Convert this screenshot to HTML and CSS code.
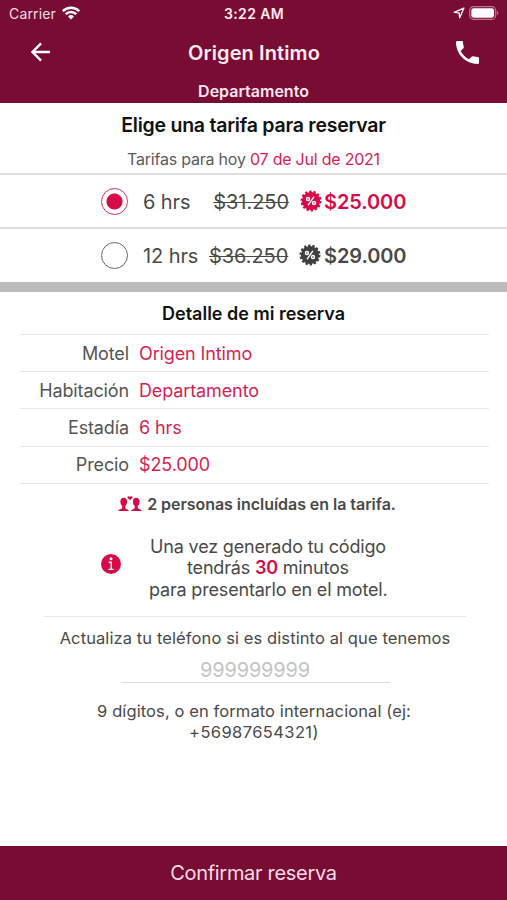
FILE: index.html
```html
<!DOCTYPE html>
<html lang="es">
<head>
<meta charset="utf-8">
<meta name="viewport" content="width=device-width, initial-scale=1">
<title>Origen Intimo</title>
<link rel="stylesheet" href="styles.css">
</head>
<body>
<svg width="0" height="0" class="defs" aria-hidden="true">
  <symbol id="badge" viewBox="0 0 22 22">
    <circle cx="11" cy="11" r="9.1" fill="currentColor"/>
    <circle cx="11" cy="11" r="9.2" fill="none" stroke="currentColor" stroke-width="2.6" stroke-dasharray="2.3 1.829"/>
    <g fill="none" stroke="#fff" stroke-width="1.4" stroke-linecap="round">
      <path d="M13.700 7.200 8.300 14.800"/><circle cx="8" cy="9" r="1.500"/><circle cx="14" cy="13" r="1.500"/>
    </g>
  </symbol>
</svg>
<div class="app">
  <header class="header">
    <div class="status">
      <div class="status-left"><span class="carrier">Carrier</span>
        <svg class="wifi" viewBox="0 0 18 14" fill="none" stroke="#fff" stroke-width="2.4"><path d="M.8 5.2a11.6 11.6 0 0 1 16.4 0M3.7 8.2a7.5 7.5 0 0 1 10.6 0"/><path d="M9 13.6 6 10.5a4.3 4.3 0 0 1 6 0Z" fill="#fff" stroke="none"/></svg>
      </div>
      <span class="time">3:22 AM</span>
      <div class="status-right">
        <svg class="locate" viewBox="0 0 12 12" fill="none" stroke="#fff" stroke-width="1.3" stroke-linejoin="round"><path d="M10.9 1.1 1.2 5.4l4.9.5.6 4.9Z"/></svg>
        <svg class="battery" viewBox="0 0 30 14"><rect x=".7" y=".7" width="26" height="12.6" rx="3.8" fill="none" stroke="#b9798e" stroke-width="1.2"/><rect x="2.3" y="2.3" width="22.8" height="9.4" rx="2.4" fill="#fff"/><path d="M28 4.8c1.8.7 1.8 3.7 0 4.4Z" fill="#b9798e"/></svg>
      </div>
    </div>
    <div class="nav">
      <svg class="back" viewBox="0 0 24 24" fill="none" stroke="#fff" stroke-width="2.9"><path d="M24 12H3.500M13.300 1.700 3 12l10.300 10.300"/></svg>
      <h1 class="title">Origen Intimo</h1>
      <svg class="phone" viewBox="3 3 18 18" fill="#fff"><path d="M6.62 10.79c1.44 2.83 3.76 5.14 6.59 6.59l2.2-2.2c.27-.27.67-.36 1.02-.24 1.12.37 2.33.57 3.57.57.55 0 1 .45 1 1V20c0 .55-.45 1-1 1-9.39 0-17-7.61-17-17 0-.55.45-1 1-1h3.5c.55 0 1 .45 1 1 0 1.25.2 2.45.57 3.57.11.35.03.74-.25 1.02z"/></svg>
    </div>
    <div class="room"><span>Departamento</span></div>
  </header>

  <section class="rates">
    <h2 class="rates-title"><span>Elige una tarifa para reservar</span></h2>
    <p class="rates-date"><span>Tarifas para hoy <b>07 de Jul de 2021</b></span></p>
    <div class="rate selected">
      <span class="radio"></span><span class="hours"><span>6 hrs</span></span><s class="old"><span>$31.250</span></s>
      <svg class="badge"><use href="#badge"/></svg><span class="price">$25.000</span>
    </div>
    <div class="rate">
      <span class="radio"></span><span class="hours"><span>12 hrs</span></span><s class="old"><span>$36.250</span></s>
      <svg class="badge"><use href="#badge"/></svg><span class="price">$29.000</span>
    </div>
  </section>

  <section class="detail">
    <h2 class="detail-title"><span>Detalle de mi reserva</span></h2>
    <dl class="facts">
      <div class="fact"><dt>Motel</dt><dd>Origen Intimo</dd></div>
      <div class="fact"><dt>Habitación</dt><dd>Departamento</dd></div>
      <div class="fact"><dt>Estadía</dt><dd>6 hrs</dd></div>
      <div class="fact"><dt>Precio</dt><dd>$25.000</dd></div>
    </dl>
    <p class="people">
      <svg class="couple" viewBox="0 0 24 16" fill="#d60b47"><path id="person" d="M5.800 1.800C3.500 1.800 2.200 3.400 2.400 6c.1 1.900.9 3.200 1.800 4v1.600c0 1-.7 1.300-1.900 1.600C.9 13.600.4 14 .3 15h10.400c0-1-.4-1.400-1.800-1.800-1.100-.3-1.600-.6-1.600-1.600V10c.9-.8 1.700-2.100 1.800-4 .1-2.600-1.200-4.200-3.300-4.200Z"/><use href="#person" transform="matrix(-1 0 0 1 24 0)"/><path d="M12 4.200 9.700 2C8.500.6 10.900-.6 12 .8c1.100-1.400 3.500-.2 2.300 1.200Z"/></svg>
      <span>2 personas incluídas en la tarifa.</span>
    </p>
    <div class="notice">
      <svg class="info" viewBox="0 0 20 20"><circle cx="10" cy="10" r="10" fill="#d60b47"/><circle cx="10" cy="4.800" r="1.500" fill="#fff"/><path d="M7.700 8.200h2.500v7M7.400 15.400h5.200" fill="none" stroke="#fff" stroke-width="1.400"/></svg>
      <p>Una vez generado tu código<br>tendrás <b>30</b> minutos<br>para presentarlo en el motel.</p>
    </div>
  </section>

  <section class="contact">
    <label class="contact-label" for="tel">Actualiza tu teléfono si es distinto al que tenemos</label>
    <input class="contact-input" id="tel" type="tel" placeholder="999999999">
    <p class="hint">9 dígitos, o en formato internacional (ej:<br><span class="example">+56987654321)</span></p>
  </section>

  <button class="confirm"><span>Confirmar reserva</span></button>
</div>
</body>
</html>
```
FILE: styles.css
```css
* { box-sizing: border-box; }
body { margin: 0; background: #fff; color: #4a4a4a; font-family: Inter, "Liberation Sans", sans-serif; }
h1, h2, p, dl, dd { margin: 0; }
.defs { position: absolute; }
.app { display: flex; flex-direction: column; height: 900px; overflow: hidden; }

.header { height: 103px; background: #790c33; color: #fff; flex: none; }
.status { display: grid; grid-template-columns: 1fr auto 1fr; align-items: center; height: 27px; padding: 0 8px 0 9px; }
.status-left, .status-right { display: flex; align-items: center; }
.status-left { gap: 6px; }
.carrier { font-size: 14px; color: #f3dce4; letter-spacing: .15px; }
.wifi { width: 18px; height: 14px; margin-top: -2px; }
.time { font-size: 14px; font-weight: 600; letter-spacing: .4px; color: #fbeaf0; }
.status-right { justify-content: flex-end; gap: 4px; margin-top: -1px; }
.locate { width: 12px; height: 12px; }
.battery { width: 30px; height: 14px; }
.nav { display: flex; align-items: center; justify-content: space-between; height: 49px; padding: 0 28px 0 28px; }
.back { width: 24px; height: 20px; }
.title { font-size: 20px; font-weight: 600; letter-spacing: .1px; color: #fdeaf1; margin-top: 2px; }
.phone { width: 23px; height: 23px; margin-top: 1px; }
.room { display: flex; justify-content: center; align-items: center; height: 29px; padding-top: 1px; font-size: 16px; font-weight: 600; color: #fbe6ee; }

.rates { flex: none; padding-bottom: 1px; border-bottom: 10px solid #bcbcbc; }
.rates-title { height: 44px; line-height: 45px; text-align: center; font-size: 19.500px; font-weight: 600; letter-spacing: -.24px; color: #111; }
.rates-date { height: 26px; line-height: 24px; text-align: center; font-size: 16px; letter-spacing: -.22px; color: #5c5c5c; }
.rates-date b { font-weight: 400; color: #d61f54; }
.rate { display: flex; align-items: center; height: 54px; border-top: 2px solid #dedede; padding-left: 101px; font-size: 20px; }
.radio { width: 27px; height: 27px; border: 1.500px solid #666; border-radius: 50%; flex: none; }
.hours { width: 66px; margin-left: 15px; white-space: nowrap; letter-spacing: -.1px; }
.old { width: 79px; text-align: right; flex: none; letter-spacing: -.05px; text-decoration-thickness: 1px; }
.selected .old { width: 80px; }
.hours, .old, .price { padding-top: 1px; }
.badge { width: 22px; height: 22px; margin-left: 11px; color: #404040; flex: none; }
.selected .badge { margin-left: 11px; }
.price { font-weight: 600; margin-left: 3px; letter-spacing: -.1px; }
.selected .price { margin-left: 2px; }
.selected .radio { border-color: #dc2c60; background: radial-gradient(circle, #d60b47 7.500px, #fff 8.500px); }
.selected .badge, .selected .price { color: #d60b47; }

.detail { flex: none; }
.detail-title { height: 42px; line-height: 43px; text-align: center; font-size: 18px; font-weight: 600; color: #111; }
.facts { margin: 0 18px 0 20px; border-bottom: 1px solid #e6e6e6; }
.fact { display: flex; gap: 10px; align-items: center; height: 37.200px; border-top: 1px solid #e6e6e6; font-size: 18px; letter-spacing: -.12px; }
.fact dt { width: 109px; text-align: right; color: #555; }
.fact dd { color: #d61f54; }
.people { display: flex; justify-content: center; align-items: center; gap: 5px; height: 41px; padding-left: 7px; font-size: 16px; font-weight: 600; letter-spacing: -.04px; }
.couple { width: 24px; height: 16px; }
.notice { display: flex; align-items: center; height: 91px; padding: 0 119px 4px 101px; }
.info { width: 20px; height: 20px; margin: 0 28px 8px 0; flex: none; }
.notice p { flex: none; text-align: center; font-size: 18px; line-height: 21.600px; letter-spacing: -.18px; width: 238px; white-space: nowrap; }
.notice b { color: #d60b47; font-weight: 600; }

.contact { flex: 1; margin: 0 41px 0 44px; border-top: 1px solid #e6e6e6; text-align: center; display: flex; flex-direction: column; align-items: center; }
.contact-label { height: 43px; line-height: 43px; font-size: 16.500px; letter-spacing: .1px; white-space: nowrap; }
.contact-input { width: 269px; height: 23px; padding: 0 0 1px; border: 0; border-bottom: 1px solid #ddd; text-align: center; font: 20px Inter, "Liberation Sans", sans-serif; letter-spacing: -.2px; background: none; outline: 0; }
.contact-input::placeholder { color: #c4c4c4; opacity: 1; }
.hint { margin-top: 18px; padding-right: 2px; font-size: 16.500px; line-height: 21px; letter-spacing: .1px; white-space: nowrap; }
.example { letter-spacing: .4px; }

.confirm { flex: none; height: 54px; padding-top: 1px; border: 0; background: #790c33; color: #f8dbe6; font: 20px Inter, "Liberation Sans", sans-serif; letter-spacing: -.3px; }
```
